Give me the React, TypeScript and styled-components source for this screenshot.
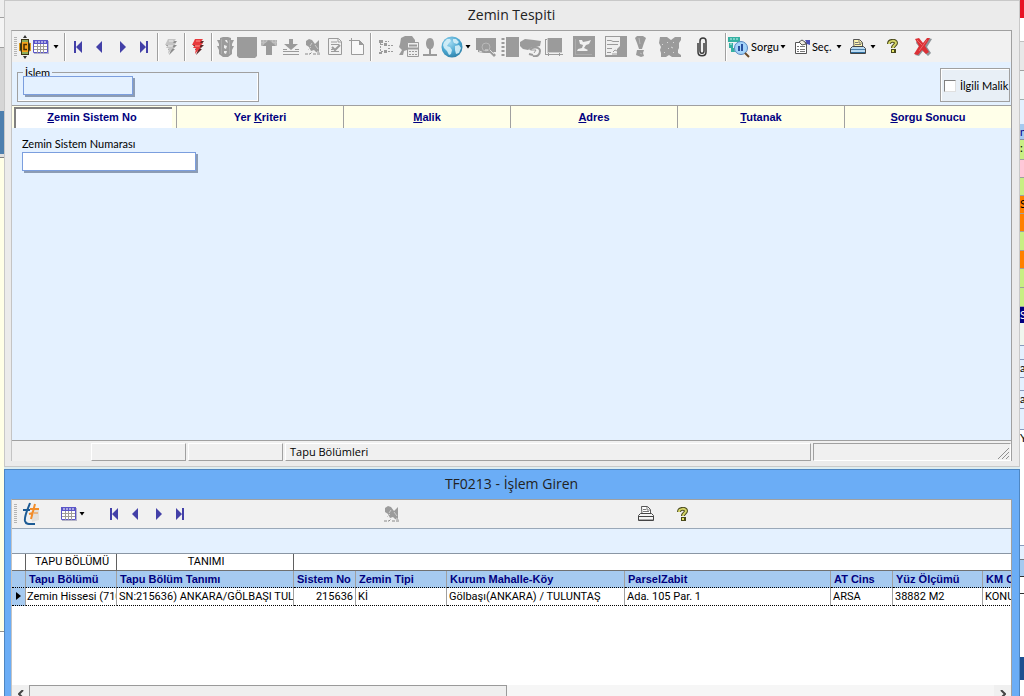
import React from "react";
import styled, { createGlobalStyle } from "styled-components";

const Global = createGlobalStyle`
  *, *::before, *::after { box-sizing: border-box; }
  body { margin: 0; font: 11px/14px Lato, "Liberation Sans", Arial, sans-serif; color: #000; background: #fff; }
  button, input { font: inherit; color: inherit; }
`;
const BOLD = `font-family: "Liberation Sans", Arial, sans-serif; font-weight: 700;`;

/* ---------- desktop ---------- */
const Desktop = styled.div`
  display: grid;
  grid-template-columns: 4px minmax(0, 1fr) 4px;
  height: 100vh;
  min-height: 600px;
  overflow: hidden;
`;
const Strip = styled.div`
  overflow: hidden;
  display: flex;
  flex-direction: column;
`;
const Band = styled.div<{ $h?: number; $bg: string; $line?: string; $ink?: string }>`
  flex: ${(p) => (p.$h ? `0 0 ${p.$h}px` : "1 0 0")};
  background: ${(p) => p.$bg};
  color: ${(p) => p.$ink ?? "#000"};
  border-bottom: ${(p) => (p.$line ? `1px solid ${p.$line}` : "0")};
  overflow: hidden;
  line-height: 16px;
`;
const Windows = styled.main`
  display: flex;
  flex-direction: column;
  min-width: 0;
  background: #dcecf0;
  gap: 2px;
`;

/* ---------- windows ---------- */
const Win = styled.section<{ $active?: boolean }>`
  display: flex;
  flex-direction: column;
  flex: ${(p) => (p.$active ? "1 1 0" : "0 0 auto")};
  min-height: 0;
  padding: 0 7px ${(p) => (p.$active ? 0 : 5)}px 6px;
  background: ${(p) => (p.$active ? "#6badf6" : "#ebebeb")};
  border: 1px solid ${(p) => (p.$active ? "#4e86c2" : "#c8c8c8")};
  border-bottom-width: ${(p) => (p.$active ? 0 : 1)}px;
`;
const Title = styled.h1`
  margin: 0;
  height: 29px;
  font: 400 14px/28px "Open Sans", "Noto Sans", sans-serif;
  text-align: center;
  color: #222;
`;
const Client = styled.div<{ $fill?: boolean }>`
  display: flex;
  flex-direction: column;
  flex: ${(p) => (p.$fill ? "1 1 0" : "0 0 auto")};
  min-height: 0;
  background: #e4f1ff;
  border: 1px solid #a0a0a0;
  border-width: 1px 1px 0;
  border-left-color: #c4c4c4;
`;

/* ---------- toolbars ---------- */
const Toolbar = styled.div<{ $h: number }>`
  display: flex;
  align-items: center;
  height: ${(p) => p.$h}px;
  padding-left: 2px;
  background: #f1f1f1;
  overflow: hidden;
`;
const Grip = styled.span`
  flex: none;
  width: 3px;
  height: 20px;
  margin-right: 1px;
  background: repeating-linear-gradient(#b4b4b4 0 1px, transparent 1px 2px);
`;
const Sep = styled.span`
  flex: none;
  width: 5px;
  height: 28px;
  background: linear-gradient(90deg, transparent 2px, #a0a0a0 2px 3px, #fff 3px 4px, transparent 4px);
`;
const Space = styled.span<{ $w: number }>`
  flex: none;
  width: ${(p) => p.$w}px;
`;
const ToolButton = styled.button<{ $w?: number }>`
  flex: none;
  display: flex;
  align-items: center;
  justify-content: center;
  gap: 1px;
  width: ${(p) => (p.$w ? `${p.$w}px` : "auto")};
  height: 26px;
  padding: 0;
  border: 0;
  background: none;
  svg { flex: none; display: block; }
`;

/* ---------- form ---------- */
const FilterBar = styled.div`
  display: flex;
  justify-content: space-between;
  align-items: flex-start;
  height: 44px;
  padding: 4px 1px 0 5px;
  border-bottom: 1px solid #a0a0a0;
`;
const Group = styled.fieldset`
  width: 242px;
  height: 36px;
  margin: 0;
  padding: 0 5px;
  border: 1px solid #a0a0a0;
  box-shadow: inset -1px -1px #fff;
  legend { padding: 0 2px; height: 12px; line-height: 14px; }
`;
const Field = styled.input<{ $w: number; $plain?: boolean }>`
  display: block;
  position: relative;
  width: ${(p) => p.$w}px;
  height: 19px;
  padding: 0 3px;
  border: 1px solid #7b9ede;
  background: ${(p) => (p.$plain ? "#e4f1ff" : "#fff")};
  box-shadow: 2px 2px #8c9cb4;
  border-radius: 0;
  outline: 0;
  ${Group} & { margin-top: -2px; }
`;
const CheckLabel = styled.label`
  display: flex;
  align-items: center;
  gap: 4px;
  width: 70px;
  height: 34px;
  margin-top: 2px;
  padding: 1px 0 0 3px;
  white-space: nowrap;
  border: 1px solid #a0a0a0;
  box-shadow: inset 1px 1px #fff;
  background: #e8eff6;
  input {
    appearance: none;
    flex: none;
    width: 12px;
    height: 12px;
    margin: 0;
    background: #fff;
    border: 1px solid #808080;
    border-right-color: #e0e0e0;
    border-bottom-color: #e0e0e0;
  }
`;
const Tabs = styled.div`
  display: grid;
  grid-template-columns: minmax(0, 164fr) repeat(5, minmax(0, 167fr));
  height: 22px;
  background: #ffffe9;
`;
const Tab = styled.button<{ $on?: boolean }>`
  margin: ${(p) => (p.$on ? "1px 4px 0 2px" : "0")};
  padding: ${(p) => (p.$on ? "0 4px 3px 0" : "0")};
  background: ${(p) => (p.$on ? "#fff" : "#ffffe9")};
  border: 0 solid ${(p) => (p.$on ? "#808080" : "#a0a0a0")};
  border-width: ${(p) => (p.$on ? "2px 0 0 2px" : "0 0 0 1px")};
  ${BOLD}
  color: #000080;
`;
const Page = styled.div`
  min-height: 312px;
  padding: 9px 10px;
  label { display: block; margin-bottom: 1px; }
`;
const StatusBar = styled.div`
  display: flex;
  gap: 2px;
  height: 21px;
  padding-top: 2px;
  border-top: 1px solid #a0a0a0;
  background: #f0f0f0;
  font: 11px/16px "Open Sans", "Noto Sans", sans-serif;
`;
const Cell = styled.div<{ $w?: number; $kind?: "flat" | "sunken" }>`
  flex: ${(p) => (p.$w ? `0 1 ${p.$w}px` : "1 1 0")};
  padding-left: 4px;
  display: flex;
  justify-content: space-between;
  align-items: flex-end;
  border: 1px solid;
  border-color: ${(p) =>
    p.$kind === "flat" ? "transparent" : p.$kind === "sunken" ? "#a0a0a0 #fff #fff #a0a0a0" : "#fff #a0a0a0 #a0a0a0 #fff"};
`;

/* ---------- grid ---------- */
const Blank = styled.div`
  flex: none;
  height: 25px;
  border-top: 1px solid #9aa8b8;
`;
const GridPane = styled.div`
  flex: 1 1 0;
  min-height: 0;
  overflow: hidden;
  background: #fff;
  border-top: 1px solid #8a96a4;
`;
const Grid = styled.table`
  table-layout: fixed;
  width: 1060px;
  font-family: Roboto, "Liberation Sans", sans-serif;
  border-collapse: separate;
  border-spacing: 0;
  th, td {
    height: 17px;
    padding: 0 0 0 2px;
    line-height: 16px;
    text-align: left;
    white-space: nowrap;
    overflow: hidden;
    font-weight: 400;
    border-right: 1px solid #a0a0a0;
    border-bottom: 1px solid #a0a0a0;
  }
`;
const BandRow = styled.tr`
  && th { text-align: center; border-right-color: #606060; border-bottom-color: #707070; }
`;
const HeadRow = styled.tr`
  && th {
    background: #a6caf0;
    color: #000080;
    ${BOLD}
    padding-left: 3px;
    border-bottom: 1px dotted #000;
  }
`;
const DataRow = styled.tr`
  && td { height: 18px; border-bottom: 1px dotted #000; }
  && td:first-child { background: #a6caf0; padding: 0 0 0 4px; }
  && td:nth-child(2) { padding-left: 1px; }
  && td.num { text-align: right; padding-right: 2px; }
`;
const HScroll = styled.div`
  flex: none;
  display: flex;
  height: 11px;
  overflow: hidden;
  background: #f6f6f6;
`;
const Arrow = styled.button`
  width: 17px;
  height: 17px;
  padding: 0;
  border: 0;
  background: #f0f0f0;
  svg { display: block; margin: auto; }
`;
const Track = styled.div`
  flex: 1;
  height: 17px;
`;
const Thumb = styled.div`
  width: 49.5%;
  height: 17px;
  background: #efefef;
  border: 1px solid #9a9a9a;
`;

/* ---------- icons ---------- */
const G = "#9b9b9b";
const Svg = ({ w = 20, h = 20, children }: { w?: number; h?: number; children: React.ReactNode }) => (
  <svg width={w} height={h} viewBox={`0 0 ${w} ${h}`} fill="none" aria-hidden="true">
    {children}
  </svg>
);
const Caret = () => (
  <Svg w={6} h={4}><path d="M.5 0h5L3 3.500z" fill="#000" /></Svg>
);
const Lantern = () => (
  <Svg w={12} h={24}>
    <path d="M6 0l2 3H4zM6 24l2-3H4z" fill="#333" />
    <path d="M2 4h8v3l1 2v6l-1 2v3H2v-3l-1-2V9l1-2z" fill="#3a3413" />
    <path d="M3 5h6v2H3zM3 17h6v2H3z" fill="#8fae58" />
    <path d="M3 7h6v10H3z" fill="#f5a21c" />
    <path d="M8 9.500H5v5h3" stroke="#4a2c00" strokeWidth="1.500" />
    <path d="M0 8h1v8H0zM11 8h1v8h-1z" fill="#d79a20" />
  </Svg>
);
const GridIcon = () => (
  <Svg w={16} h={14}>
    <path d="M.5.5h14v12H.5z" fill="#fff" stroke="#5a55c8" />
    <path d="M0 0h15v4H0z" fill="#5a55c8" />
    <path d="M2 2h2M5 2h2M8 2h2M11 2h2" stroke="#fff" />
    <path d="M4.500 4v9M7.500 4v9M10.500 4v9M1 6.500h13M1 9.500h13" stroke="#a09c98" />
    <path d="M1 13.500h15M15.500 1v12" stroke="#b4b4c8" />
  </Svg>
);
const NAV = "#4340a8";
const First = () => <Svg w={10} h={12}><path d="M1 0h2v12H1zM9 0v12L3 6z" fill={NAV} /></Svg>;
const Prev = () => <Svg w={10} h={12}><path d="M7 0v12L1 6z" fill={NAV} /></Svg>;
const Next = () => <Svg w={10} h={12}><path d="M3 0v12l6-6z" fill={NAV} /></Svg>;
const Last = () => <Svg w={10} h={12}><path d="M7 0h2v12H7zM1 0v12l6-6z" fill={NAV} /></Svg>;
const Bolt = ({ red }: { red?: boolean }) => (
  <Svg w={14} h={16}>
    <path d="M5 2h8l-3 4h3L9 10h2l-6 6 2-5H4l2-4H2z" fill={red ? "#5b2424" : "#8c8c8c"} />
    <path d="M4 0h8L9 4h3L8 8h2l-6 7 1-6H2l2-3H1z" fill={red ? "#e8393c" : "#c4c4c4"} />
    <path d="M5 2h4M4 7h5" stroke={red ? "#ff9a90" : "#eee"} />
  </Svg>
);
const Traffic = () => (
  <Svg w={18}>
    <path d="M4 1l3-1h5l3 1v2h3l-2 4v2h2l-2 4v4l-4 3H7l-4-3v-4L1 9h2V7L1 3h3z" fill={G} />
    <path d="M9 3h2l1 3-2-1zM8 8l3 1-1 3-2-1zM8 14l3 0-1 3-2-1z" fill="#eee" />
    <path d="M5.500 2v15M13.500 3v14" stroke="#acacac" />
  </Svg>
);
const Square = () => <Svg w={22} h={22}><path d="M1 1h20v19l-2 2H3l-2-2z" fill={G} /></Svg>;
const Up = () => (
  <Svg w={18} h={18}>
    <path d="M1 2h16v6H1z" fill="#c0c0c0" />
    <path d="M1 3h16M1 6h16" stroke="#a8a8a8" strokeDasharray="2 1" />
    <path d="M9 2l7 6h-4v9H6V8H2z" fill={G} />
  </Svg>
);
const Down = () => (
  <Svg w={18} h={18}>
    <path d="M7 1h4v5h5l-7 6-7-6h5z" fill={G} />
    <path d="M1 11.500h4M13 11.500h4M1 13.500h16M1 16.500h16" stroke={G} />
  </Svg>
);
const Pin = () => (
  <Svg w={16} h={16}>
    <path d="M1 2l3-2 3 1 3 4 4-4v13l-3-1-2-2-3 1-2-4-3-2z" fill={G} />
    <path d="M10 6l3 4M7 4l-2 3M3 11l3-3M12 12l3 2" stroke="#ccc" />
    <path d="M0 15h5l2-2M8 15h8" stroke="#888" strokeDasharray="3 1" />
  </Svg>
);
const DocCheck = () => (
  <Svg w={16} h={17}>
    <path d="M1.500.5h10l3 3v13h-13z" stroke={G} />
    <path d="M11 1v3h3M4 4h6M4 6.500h8M4 13.500h8M4 11.500h2" stroke={G} />
    <path d="M5 9l3 3 5-5" stroke={G} strokeWidth="2" />
  </Svg>
);
const NewDoc = () => (
  <Svg w={16} h={17}>
    <path d="M2.500 2.500h8l4 4v10h-12z" fill="#f8f8f8" stroke={G} />
    <path d="M10 2v5h5z" fill={G} /><path d="M0 2.500h5M2.500 0v5" stroke={G} />
  </Svg>
);
const Tree = () => (
  <Svg w={16} h={16}>
    <path d="M2.500 1v13M3 5.500h4M3 12.500h4" stroke={G} strokeDasharray="2 1" />
    <path d="M1 1h4v3H1zM6 4h3v3H6zM6 11h3v3H6zM1 13h3v2H1z" fill={G} />
    <path d="M7 2.500h4M10 6.500h6M10 9.500h3M10 12.500h6" stroke={G} strokeDasharray="2 1" />
  </Svg>
);
const HeadCalc = () => (
  <Svg w={22} h={21}>
    <path d="M3 2l4-2h7l3 4v4H9v6l-3 1-1 4H1l3-5-3-3 1-3z" fill={G} />
    <path d="M9.500 6.500h11v14h-11z" fill="#eee" stroke={G} />
    <path d="M11 9.500h8M9 12.500h12" stroke={G} strokeWidth="2" />
    <path d="M11 15.500h8M11 18.500h8" stroke={G} strokeDasharray="2 1" />
  </Svg>
);
const Stamp = () => (
  <Svg w={14} h={18}>
    <path d="M7 0c3 0 4 3 4 6s-2 5-3 5v5h6v2H0v-2h6v-5c-1 0-3-2-3-5s1-6 4-6z" fill={G} />
  </Svg>
);
const Globe = () => (
  <Svg w={22} h={22}>
    <defs>
      <radialGradient id="sea" cx=".4" cy=".3" r=".8">
        <stop offset="0" stopColor="#9ed8f0" /><stop offset=".55" stopColor="#4aa6d0" /><stop offset="1" stopColor="#2a789f" />
      </radialGradient>
    </defs>
    <circle cx="11" cy="11" r="10.500" fill="url(#sea)" />
    <path d="M3 6l3-3 3 0 1 2-2 2-2 3 3 1 2 3-1 4-2 1-2-4-3-3-1-3zM12 3l3 0 3 3-2 2-3-1-1-2zM14 10l4-1 2 3-2 5-3 1-1-4z" fill="#d6eff8" opacity=".9" />
  </Svg>
);
const BoardSearch = () => (
  <Svg w={20} h={20}>
    <path d="M0 1h20v14H17l3 3-2 2-4-4H8l-6-1v-2H0z" fill={G} />
    <circle cx="10" cy="10" r="4" stroke="#b8b8b8" /><path d="M3 14l3 1M14 13l4 4M9 13l3 0" stroke="#ddd" />
  </Svg>
);
const Notebook = () => (
  <Svg w={18} h={20}>
    <path d="M5 0h13v20H5z" fill={G} />
    <path d="M2 1v18" stroke={G} strokeWidth="3" strokeDasharray="2 2" />
  </Svg>
);
const Hand = () => (
  <Svg w={22} h={20}>
    <path d="M0 5l5-3 9 1 7 1-1 5-4 1-4 0-4 3-5-1-3-3z" fill={G} />
    <path d="M10 13c2-4 10-3 10 1s-3 6-7 5M9 17l4 1" stroke={G} strokeWidth="2" />
    <path d="M11 13h5l-2 3" stroke={G} />
  </Svg>
);
const Book = () => (
  <Svg w={18} h={19}>
    <path d="M2 1h15v15H2z" fill={G} />
    <path d="M.5 2v16M0 17.500h18M3.500 16v3M14.500 16v3M0 2.500h3" stroke={G} /><path d="M2.500 1v15M2 15.500h15" stroke="#ccc" />
  </Svg>
);
const Chart = () => (
  <Svg w={22} h={21}>
    <path d="M0 0h22v21H0z" fill={G} />
    <path d="M6 4h3l1 2 5-1 3-1-2 4-3 1-2 3 4 2-1 1H4l1-2 4-1 1-3-3-1z" fill="#f0f0f0" /><path d="M2.500 3v15M2 18.500h17" stroke="#acacac" />
  </Svg>
);
const Report = () => (
  <Svg w={22} h={21}>
    <path d="M0 0h22v21H0z" fill={G} /><path d="M1 1h14v9l-3 3v6H1z" fill="#efefef" />
    <path d="M2 4.500h4l2 1h6M2 8.500h11M2 12.500h5M2 16.500h4M8 16l2-2 2 1 2-2M7 18h5" stroke={G} />
  </Svg>
);
const Bang = () => (
  <Svg w={12} h={21}>
    <path d="M1 2l2-2h6l3 2-2 5-2 6H5L3 7z" fill={G} /><path d="M3 14h7l-1 3 1 3-3 1-5-2z" fill={G} /><path d="M5 2l1 6M6 17l2 1" stroke="#bbb" />
  </Svg>
);
const Scatter = () => (
  <Svg w={22} h={21}>
    <path d="M1 1h7l4 3 4-3h6v3l-2 3v5l-1 2v3l3 2v2h-9l-3-2-3 2H2v-4l-1-3 1-3-2-4z" fill={G} />
    <path d="M8 6l1 1M12 11l2 1M9 13l1-1M15 6l-1 1M5 17l1-1M14 17l1-1M3 8l1 1" stroke="#d8d8d8" />
  </Svg>
);
const Clip = () => (
  <Svg w={12} h={20}>
    <path d="M2 6v9c0 5 8 5 8 0V4c0-4-6-4-6 0v10c0 3 4 3 4 0V6" stroke="#3a3a3a" strokeWidth="1.500" />
  </Svg>
);
const QueryIcon = () => (
  <Svg w={22} h={22}>
    <path d="M0 1h12v5H0zM1 7h4v5H1zM3 12h4v4H3z" fill="#35b0a2" />
    <path d="M2 3h8M2 8h2" stroke="#c8f4ee" strokeDasharray="2 1" />
    <path d="M5 7h5v9H7z" fill="#d8ecff" />
    <circle cx="13" cy="12" r="6.500" fill="#a4d4fa" stroke="#5686c0" />
    <path d="M11 15v-5M14 15V8" stroke="#2850a0" strokeWidth="2" /><path d="M17 17l4 4" stroke="#6a4a28" strokeWidth="2" />
  </Svg>
);
const SelectIcon = () => (
  <Svg w={17} h={16}>
    <path d="M1.500 3.500h11v11h-11z" fill="#fff" stroke="#555" />
    <path d="M3 7.500h2M6 7.500h5M3 10.500h2M6 10.500h5M3 12.500h2M6 12.500h5" stroke="#777" />
    <path d="M5 3l3-2 3 2 1 2-4 1z" fill="#f2efe4" stroke="#555" /><path d="M11 1h5v5l-3-1z" fill="#4b50b8" />
  </Svg>
);
const Printer = ({ color }: { color?: boolean }) => (
  <Svg w={16} h={16}>
    <path d="M4 8L3.500.5h6l3 3V8" fill={color ? "#fff7b0" : "#fff"} stroke="#555" />
    <path d="M9 1v3h3M5 3.500h3M5 5.500h6" stroke="#777" />
    <path d="M.5 9.500l2-2h11l2 2v5H.5z" fill={color ? "#b9daf2" : "#f4f4f4"} stroke="#444" />
    <path d="M1 10.500h14" stroke={color ? "#4b7fa8" : "#444"} /><path d="M1 13.500h14" stroke={color ? "#2d6c9c" : "#aaa"} />
  </Svg>
);
const Help = () => (
  <Svg w={12} h={15}>
    <path d="M2 5c0-4 7-4 7-1 0 2-3 2-3 5" stroke="#4a4a1c" strokeWidth="4" /><path d="M4 10h5v4H4z" fill="#4a4a1c" />
    <path d="M2 5c0-4 7-4 7-1 0 2-3 2-3 5" stroke="#d4d468" strokeWidth="2" /><path d="M5 11h2v2H5z" fill="#e4e468" />
  </Svg>
);
const Cross = () => (
  <Svg w={18} h={19}>
    <path d="M3 3l6 4 5-6 4 1-5 8 4 6-3 3-5-5-4 5-4-1 5-7-4-5z" fill="#8d9498" />
    <path d="M1 2l4-1 4 5 4-5h3l-5 8 4 6-3 2-4-4-4 5-4-1 5-8z" fill="#dc3036" /><path d="M3 3l5 5M13 3L5 14" stroke="#ec6868" />
  </Svg>
);
const Logo = () => (
  <Svg w={18} h={24}>
    <path d="M9 9l8-3v12l-7 2z" fill="#e2e0dc" />
    <path d="M8 1c-2 6-6 13-5 18 1 4 5 3 10 3" stroke="#1d5b94" strokeWidth="2" /><path d="M1 8h7" stroke="#1d5b94" strokeWidth="2" />
    <path d="M13 2L9 17M7 12l4-1M8 7h9" stroke="#f28c28" strokeWidth="2" /><path d="M12 11h4" stroke="#f28c28" />
  </Svg>
);
const SizeGrip = () => (
  <Svg w={13} h={13}><path d="M1 12L12 1M5 12l7-7M9 12l3-3" stroke="#909090" /></Svg>
);

type Tool = "sep" | { n: string; w: number; i: React.ReactNode };
const tools: Tool[] = [
  { n: "Kapat", w: 14, i: <Lantern /> },
  { n: "Tablo", w: 18, i: <GridIcon /> },
  { n: "Tablo menüsü", w: 12, i: <Caret /> },
  "sep",
  { n: "İlk", w: 22, i: <First /> },
  { n: "Önceki", w: 22, i: <Prev /> },
  { n: "Sonraki", w: 22, i: <Next /> },
  { n: "Son", w: 22, i: <Last /> },
  "sep",
  { n: "Çalıştır", w: 22, i: <Bolt /> },
  "sep",
  { n: "Durdur", w: 22, i: <Bolt red /> },
  "sep",
  { n: "Trafik", w: 22, i: <Traffic /> },
  { n: "Kare", w: 22, i: <Square /> },
  { n: "Yukarı", w: 22, i: <Up /> },
  { n: "Aşağı", w: 22, i: <Down /> },
  { n: "İğne", w: 22, i: <Pin /> },
  { n: "Onay", w: 22, i: <DocCheck /> },
  { n: "Yeni", w: 22, i: <NewDoc /> },
  "sep",
  { n: "Ağaç", w: 26, i: <Tree /> },
  { n: "Hesap", w: 20, i: <HeadCalc /> },
  { n: "Mühür", w: 22, i: <Stamp /> },
  { n: "Harita", w: 22, i: <Globe /> },
  { n: "Harita menüsü", w: 10, i: <Caret /> },
  { n: "Pano", w: 26, i: <BoardSearch /> },
  { n: "Defter", w: 22, i: <Notebook /> },
  { n: "El", w: 20, i: <Hand /> },
  { n: "Kitap", w: 26, i: <Book /> },
  { n: "Grafik", w: 34, i: <Chart /> },
  { n: "Rapor", w: 30, i: <Report /> },
  { n: "Uyarı", w: 18, i: <Bang /> },
  { n: "Dağılım", w: 42, i: <Scatter /> },
  { n: "Ek", w: 22, i: <Clip /> },
];
const tabs: [string, string, string][] = [
  ["", "Z", "emin Sistem No"],
  ["Yer ", "K", "riteri"],
  ["", "M", "alik"],
  ["", "A", "dres"],
  ["", "T", "utanak"],
  ["", "S", "orgu Sonucu"],
];
const columns: [string, number][] = [
  ["", 14], ["Tapu Bölümü", 91], ["Tapu Bölüm Tanımı", 177], ["Sistem No", 62], ["Zemin Tipi", 91],
  ["Kurum Mahalle-Köy", 178], ["ParselZabit", 206], ["AT Cins", 62], ["Yüz Ölçümü", 90], ["KM Cinsi", 89],
];
const row = ["Zemin Hissesi (710", "SN:215636) ANKARA/GÖLBAŞI TUL", "215636", "Kİ", "Gölbaşı(ANKARA) / TULUNTAŞ", "Ada. 105 Par. 1", "ARSA", "38882 M2", "KONUT"];

export default function App() {
  return (
    <>
      <Global />
      <Desktop>
        <Strip>
          <Band $h={18} $bg="#eeeeee" $line="#a0a0a0" />
          <Band $h={30} $bg="#f4f4f4" $line="#a0a0a0" />
          <Band $h={63} $bg="#d6d6d6" />
          <Band $h={43} $bg="#4d7fae" />
          <Band $h={4} $bg="#e0e0e0" $line="#808080" />
          <Band $h={474} $bg="#ffffe6" $line="#909090" />
          <Band $bg="#ffffff" />
        </Strip>
        <Windows>
          <Win>
            <Title>Zemin Tespiti</Title>
            <Client>
              <Toolbar $h={31}>
                <Grip />
                {tools.map((t, k) =>
                  t === "sep" ? <Sep key={k} /> : <ToolButton key={k} $w={t.w} aria-label={t.n}>{t.i}</ToolButton>
                )}
                <Space $w={10} />
                <Sep />
                <ToolButton><QueryIcon />Sorgu<Caret /></ToolButton>
                <Space $w={8} />
                <ToolButton><SelectIcon />Seç.<Space $w={2} /><Caret /></ToolButton>
                <Space $w={8} />
                <ToolButton aria-label="Yazdır"><Printer color /><Space $w={2} /><Caret /></ToolButton>
                <Space $w={8} />
                <ToolButton $w={18} aria-label="Yardım"><Help /></ToolButton>
                <ToolButton $w={42} aria-label="İptal"><Cross /></ToolButton>
              </Toolbar>
              <FilterBar>
                <Group>
                  <legend>İslem</legend>
                  <Field $w={110} $plain aria-label="İslem" />
                </Group>
                <CheckLabel><input type="checkbox" />İlgili Malik</CheckLabel>
              </FilterBar>
              <Tabs role="tablist">
                {tabs.map(([a, u, b], k) => (
                  <Tab key={k} role="tab" aria-selected={k === 0} $on={k === 0}>{a}<u>{u}</u>{b}</Tab>
                ))}
              </Tabs>
              <Page>
                <label htmlFor="zemin-no">Zemin Sistem Numarası</label>
                <Field id="zemin-no" $w={174} />
              </Page>
              <StatusBar>
                <Cell $w={77} $kind="flat" />
                <Cell $w={95} />
                <Cell $w={95} />
                <Cell>Tapu Bölümleri</Cell>
                <Cell $w={198} $kind="sunken"><span /><SizeGrip /></Cell>
              </StatusBar>
            </Client>
          </Win>
          <Win $active>
            <Title as="h2">TF0213 - İşlem Giren</Title>
            <Client $fill>
              <Toolbar $h={28}>
                <Grip />
                <ToolButton $w={26} aria-label="TAKBİS"><Logo /></ToolButton>
                <Space $w={16} />
                <ToolButton $w={18} aria-label="Tablo"><GridIcon /></ToolButton>
                <ToolButton $w={8} aria-label="Tablo menüsü"><Caret /></ToolButton>
                <Space $w={17} />
                <ToolButton $w={22} aria-label="İlk"><First /></ToolButton>
                <ToolButton $w={22} aria-label="Önceki"><Prev /></ToolButton>
                <ToolButton $w={22} aria-label="Sonraki"><Next /></ToolButton>
                <ToolButton $w={22} aria-label="Son"><Last /></ToolButton>
                <Space $w={190} />
                <ToolButton $w={22} aria-label="İğne"><Pin /></ToolButton>
                <Space $w={232} />
                <ToolButton $w={22} aria-label="Yazdır"><Printer /></ToolButton>
                <Space $w={17} />
                <ToolButton $w={18} aria-label="Yardım"><Help /></ToolButton>
              </Toolbar>
              <Blank />
              <GridPane>
                <Grid>
                  <colgroup>{columns.map(([c, w]) => <col key={c} width={w} />)}</colgroup>
                  <thead>
                    <BandRow><th /><th>TAPU BÖLÜMÜ</th><th>TANIMI</th><th colSpan={7} /></BandRow>
                    <HeadRow>{columns.map(([c]) => <th key={c}>{c}</th>)}</HeadRow>
                  </thead>
                  <tbody>
                    <DataRow>
                      <td><Svg w={6} h={8}><path d="M0 0l5 4-5 4z" fill="#000" /></Svg></td>
                      {row.map((v, k) => <td key={v} className={k === 2 ? "num" : undefined}>{v}</td>)}
                    </DataRow>
                  </tbody>
                </Grid>
              </GridPane>
              <HScroll>
                <Arrow aria-label="Sola kaydır"><Svg w={6} h={8}><path d="M5 0L1 4l4 4" stroke="#444" strokeWidth="2" /></Svg></Arrow>
                <Track><Thumb /></Track>
                <Arrow aria-label="Sağa kaydır"><Svg w={6} h={8}><path d="M1 0l4 4-4 4" stroke="#444" strokeWidth="2" /></Svg></Arrow>
              </HScroll>
            </Client>
          </Win>
        </Windows>
        <Strip>
          <Band $h={18} $bg="#e81123" />
          <Band $h={24} $bg="#ffffff" $line="#c0c0c0" />
          <Band $h={29} $bg="#e8e8e8" $line="#a0a0a0" />
          <Band $h={29} $bg="#eff5f6" $line="#a0b0b0" />
          <Band $h={24} $bg="#e4f1ff" />
          <Band $h={16} $bg="#a6caf0" $line="#8090a0" $ink="#000080">n</Band>
          <Band $h={20} $bg="#c8ee84" $line="#a0a0a0">:</Band>
          <Band $h={18} $bg="#ffc8d8" $line="#a0a0a0" />
          <Band $h={18} $bg="#c8ee84" $line="#a0a0a0" />
          <Band $h={18} $bg="#ff8000" $line="#a0a0a0">S</Band>
          <Band $h={18} $bg="#ff8000" $line="#a0a0a0" />
          <Band $h={19} $bg="#c8ee84" $line="#a0a0a0" />
          <Band $h={18} $bg="#ff8000" $line="#a0a0a0" />
          <Band $h={19} $bg="#c8ee84" $line="#a0a0a0" />
          <Band $h={19} $bg="#c8ee84" $line="#a0a0a0" />
          <Band $h={16} $bg="#000080" $ink="#ffffff">S</Band>
          <Band $h={23} $bg="#f0f6ee" $line="#8899bb" />
          <Band $h={14} $bg="#e4f1ff" $line="#8899bb" />
          <Band $h={18} $bg="#e4f1ff" $line="#8090b0">a</Band>
          <Band $h={13} $bg="#e4f1ff" $line="#8899bb" />
          <Band $h={18} $bg="#e4f1ff" $line="#8090b0">a</Band>
          <Band $h={21} $bg="#e4f1ff" $line="#8899bb" />
          <Band $h={116} $bg="#ffffff" $line="#8899bb">Y</Band>
          <Band $h={14} $bg="#e4f1ff" $line="#707880" />
          <Band $h={17} $bg="#a6caf0" $line="#303030" />
          <Band $h={17} $bg="#ffffff" $line="#303030" />
          <Band $h={63} $bg="#ffffff" />
          <Band $h={23} $bg="#1c4f90" />
          <Band $bg="#ffffff" />
        </Strip>
      </Desktop>
    </>
  );
}
